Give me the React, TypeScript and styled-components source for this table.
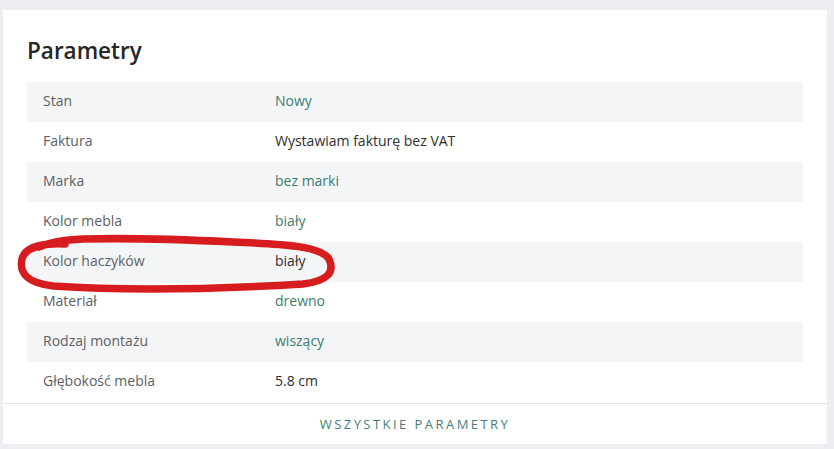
import React from "react";
import styled, { createGlobalStyle } from "styled-components";

const Global = createGlobalStyle`
  html, body { margin: 0; padding: 0; background: #eceef1; }
  body { font-family: "Open Sans", "Noto Sans", sans-serif; }
`;

const Page = styled.div`
  padding: 10px 7px 6px 3px;
`;

const Card = styled.section`
  position: relative;
  background: #ffffff;
  width: 824px;
  box-sizing: border-box;
`;

const Title = styled.h2`
  margin: 0;
  padding: 26px 24px 0 24px;
  height: 72px;
  box-sizing: border-box;
  font-size: 22.5px;
  font-weight: 600;
  color: #262626;
  line-height: 30px;
`;

const Table = styled.div`
  margin: 0 24px;
  display: flex;
  flex-direction: column;
`;

const Row = styled.div<{ $shaded: boolean }>`
  display: grid;
  grid-template-columns: 248px 1fr;
  height: 40px;
  align-items: center;
  background: ${(p) => (p.$shaded ? "#f4f5f7" : "#ffffff")};
  font-size: 14px;
  line-height: 20px;
`;

const Label = styled.span`
  padding-left: 16px;
  color: #5c6064;
  margin-top: -2px;
`;

const Value = styled.span<{ $link: boolean }>`
  color: ${(p) => (p.$link ? "#3a7d70" : "#2e2e2e")};
  margin-top: -2px;
`;

const Footer = styled.div`
  margin-top: 1px;
  border-top: 1px solid #e2e4e6;
  height: 40px;
  display: flex;
  align-items: center;
  justify-content: center;
  font-size: 13px;
  letter-spacing: 2.45px;
  color: #457e7a;
`;

const Scribble = styled.svg`
  position: absolute;
  left: 0;
  top: 0;
  pointer-events: none;
`;

const rows: { label: string; value: string; link: boolean }[] = [
  { label: "Stan", value: "Nowy", link: true },
  { label: "Faktura", value: "Wystawiam fakturę bez VAT", link: false },
  { label: "Marka", value: "bez marki", link: true },
  { label: "Kolor mebla", value: "biały", link: true },
  { label: "Kolor haczyków", value: "biały", link: false },
  { label: "Materiał", value: "drewno", link: true },
  { label: "Rodzaj montażu", value: "wiszący", link: true },
  { label: "Głębokość mebla", value: "5.8 cm", link: false },
];

export default function App() {
  return (
    <>
      <Global />
      <Page>
        <Card>
          <Title>Parametry</Title>
          <Table>
            {rows.map((r, i) => (
              <Row key={r.label} $shaded={i % 2 === 0}>
                <Label>{r.label}</Label>
                <Value $link={r.link}>{r.value}</Value>
              </Row>
            ))}
          </Table>
          <Footer>WSZYSTKIE PARAMETRY</Footer>
          <Scribble width="824" height="433" viewBox="0 0 824 433">
            <path
              d="M 62 234 C 40 233, 22 237, 19 249 C 16 263, 24 273, 50 276 C 110 280, 200 280, 300 274 C 325 271, 332 262, 326 249 C 318 236, 280 234, 230 232 C 170 229, 120 228, 80 229 C 60 230, 45 233, 36 237"
              fill="none"
              stroke="#d61c1f"
              strokeWidth="7.5"
              strokeLinecap="round"
              strokeLinejoin="round"
            />
          </Scribble>
        </Card>
      </Page>
    </>
  );
}
